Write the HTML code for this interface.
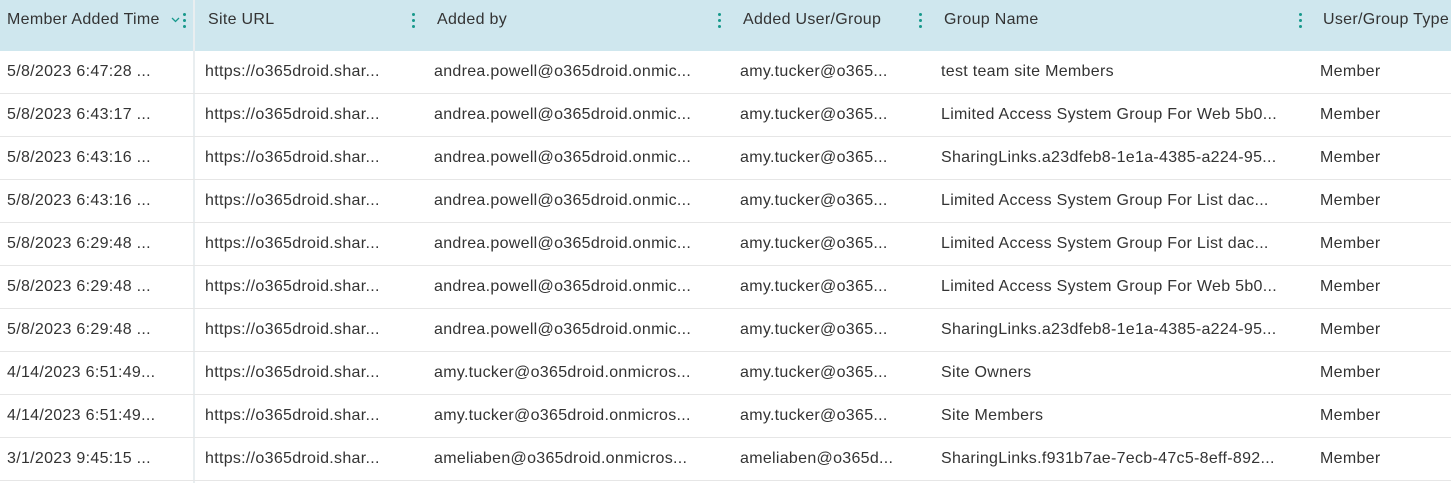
<!DOCTYPE html>
<html><head><meta charset="utf-8"><style>
body{margin:0;width:1451px;height:483px;overflow:hidden;background:#fff;font-family:"Liberation Sans",sans-serif;font-size:16px;letter-spacing:0.3px;color:#333;position:relative}
.hd{position:absolute;left:0;top:0;width:1451px;height:51px;background:#cfe7ee}
.t{position:absolute;white-space:nowrap;line-height:18px}
.h{top:11px;color:#333}
.row{position:absolute;left:0;width:1451px;height:43px;border-bottom:1px solid #e6e6e6;box-sizing:border-box}
.k{position:absolute;top:13px;width:3px}
.k i{display:block;width:3px;height:3px;border-radius:50%;background:#17998c;margin-bottom:3px}
.sep{position:absolute;left:193px;top:0;width:2px;height:483px;background:#e9eef0}
</style></head><body>
<div class="hd"></div>
<div class="sep"></div>
<div class="t h" style="left:7px">Member Added Time</div>
<svg style="position:absolute;left:171px;top:17px" width="9" height="6"><path d="M1 1l3.5 3.5L8 1" fill="none" stroke="#17998c" stroke-width="1.3"/></svg>
<div class="k" style="left:183px"><i></i><i></i><i></i></div>
<div class="t h" style="left:208px">Site URL</div>
<div class="k" style="left:412px"><i></i><i></i><i></i></div>
<div class="t h" style="left:437px">Added by</div>
<div class="k" style="left:718px"><i></i><i></i><i></i></div>
<div class="t h" style="left:743px">Added User/Group</div>
<div class="k" style="left:919px"><i></i><i></i><i></i></div>
<div class="t h" style="left:944px">Group Name</div>
<div class="k" style="left:1299px"><i></i><i></i><i></i></div>
<div class="t h" style="left:1323px">User/Group Type</div>
<div id="rows"></div>
<script>
var d=[["5/8/2023 6:47:28 ...","andrea.powell@o365droid.onmic...","amy.tucker@o365...","test team site Members"],
["5/8/2023 6:43:17 ...","andrea.powell@o365droid.onmic...","amy.tucker@o365...","Limited Access System Group For Web 5b0..."],
["5/8/2023 6:43:16 ...","andrea.powell@o365droid.onmic...","amy.tucker@o365...","SharingLinks.a23dfeb8-1e1a-4385-a224-95..."],
["5/8/2023 6:43:16 ...","andrea.powell@o365droid.onmic...","amy.tucker@o365...","Limited Access System Group For List dac..."],
["5/8/2023 6:29:48 ...","andrea.powell@o365droid.onmic...","amy.tucker@o365...","Limited Access System Group For List dac..."],
["5/8/2023 6:29:48 ...","andrea.powell@o365droid.onmic...","amy.tucker@o365...","Limited Access System Group For Web 5b0..."],
["5/8/2023 6:29:48 ...","andrea.powell@o365droid.onmic...","amy.tucker@o365...","SharingLinks.a23dfeb8-1e1a-4385-a224-95..."],
["4/14/2023 6:51:49...","amy.tucker@o365droid.onmicros...","amy.tucker@o365...","Site Owners"],
["4/14/2023 6:51:49...","amy.tucker@o365droid.onmicros...","amy.tucker@o365...","Site Members"],
["3/1/2023 9:45:15 ...","ameliaben@o365droid.onmicros...","ameliaben@o365d...","SharingLinks.f931b7ae-7ecb-47c5-8eff-892..."]];
var h="";d.forEach(function(r,i){var y=51+i*43;
h+='<div class="row" style="top:'+y+'px"></div>';var ty=y+12;
[[7,r[0]],[205,"https://o365droid.shar..."],[434,r[1]],[740,r[2]],[941,r[3]],[1320,"Member"]].forEach(function(c){h+='<div class="t" style="left:'+c[0]+'px;top:'+ty+'px">'+c[1]+'</div>';});});
document.getElementById("rows").innerHTML=h;
</script>
</body></html>
